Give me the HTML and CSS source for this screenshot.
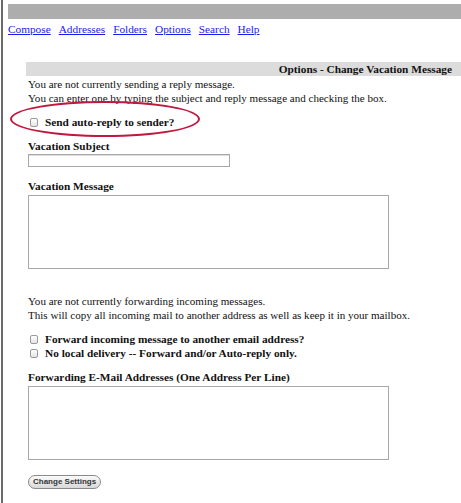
FILE: index.html
```html
<!DOCTYPE html>
<html>
<head>
<meta charset="utf-8">
<link rel="stylesheet" href="styles.css">
</head>
<body>
<div class="frame">
  <div class="topbar"></div>
  <nav class="nav">
    <a href="#">Compose</a>
    <a href="#">Addresses</a>
    <a href="#">Folders</a>
    <a href="#">Options</a>
    <a href="#">Search</a>
    <a href="#">Help</a>
  </nav>
  <div class="content">
    <div class="heading">Options - Change Vacation Message</div>
    <p class="info">You are not currently sending a reply message.<br>You can enter one by typing the subject and reply message and checking the box.</p>
    <div class="checks first">
      <label class="check"><input type="checkbox" class="box"><span>Send auto-reply to sender?</span></label>
      <div class="oval"></div>
    </div>
    <div class="field">
      <div class="label">Vacation Subject</div>
      <input type="text" class="subject">
    </div>
    <div class="field wide">
      <div class="label">Vacation Message</div>
      <textarea class="area"></textarea>
    </div>
    <p class="info second">You are not currently forwarding incoming messages.<br>This will copy all incoming mail to another address as well as keep it in your mailbox.</p>
    <div class="checks">
      <label class="check"><input type="checkbox" class="box"><span>Forward incoming message to another email address?</span></label>
      <label class="check"><input type="checkbox" class="box"><span>No local delivery -- Forward and/or Auto-reply only.</span></label>
    </div>
    <div class="field">
      <div class="label">Forwarding E-Mail Addresses (One Address Per Line)</div>
      <textarea class="area"></textarea>
    </div>
    <button class="btn">Change Settings</button>
  </div>
</div>
</body>
</html>
```
FILE: styles.css
```css
html, body {
  margin: 0;
  padding: 0;
  background: #fff;
}
body {
  font-family: "Liberation Serif", "Times New Roman", serif;
  font-size: 11.3px;
  color: #111;
}
.frame {
  margin-left: 1px;
  border-left: 2px solid #6a6a6a;
  min-height: 503px;
  box-sizing: border-box;
  padding-left: 5px;
  padding-top: 4px;
}
.topbar {
  height: 15px;
  background: #adadad;
}
.nav {
  display: flex;
  gap: 8px;
  padding-top: 3px;
  line-height: 14px;
  font-size: 11.3px;
}
.nav a {
  color: #1a1aee;
  text-decoration: underline;
}
.content {
  padding-left: 18px;
  padding-top: 26px;
}
.heading {
  background: #dcdcdc;
  font-weight: bold;
  text-align: right;
  height: 14px;
  line-height: 15px;
  padding-right: 9px;
}
.info {
  margin: 1px 0 0 2px;
  line-height: 14px;
  font-size: 11.05px;
}
.info.second {
  margin-top: 25px;
}
.checks {
  position: relative;
  margin-top: 10px;
  padding-left: 4px;
  display: flex;
  flex-direction: column;
}
.checks.first {
  margin-top: 10px;
}
.check {
  display: flex;
  align-items: center;
  gap: 7px;
  font-weight: bold;
  line-height: 14px;
}
.box {
  width: 8px;
  height: 9px;
  margin: 0;
  appearance: none;
  border: 1px solid #9a9a9a;
  border-radius: 2px;
  background: linear-gradient(#fff, #e4e4e4);
}
.oval {
  position: absolute;
  left: -16px;
  top: -14px;
  width: 186px;
  height: 32px;
  border: 2px solid #c0183e;
  border-radius: 50%;
}
.field {
  margin-top: 10px;
  padding-left: 2px;
}
.field.wide {
  margin-top: 12px;
}
.field .label {
  font-weight: bold;
  line-height: 14px;
}
.subject {
  display: block;
  margin: 1px 0 0 0;
  padding: 0;
  width: 200px;
  height: 11px;
  border: 1px solid #a8a8a8;
  box-shadow: inset 0 1px 0 #ddd;
}
.area {
  display: block;
  margin: 2px 0 0 0;
  padding: 0;
  width: 359px;
  height: 72px;
  border: 1px solid #a8a8a8;
  resize: none;
}
.btn {
  display: block;
  margin: 15px 0 0 2px;
  padding: 0 4px;
  height: 14px;
  border: 1px solid #8a8a8a;
  border-radius: 7px;
  background: linear-gradient(#fbfbfb, #d8d8d8);
  font-family: "Liberation Sans", Arial, sans-serif;
  font-size: 8px;
  font-weight: bold;
  color: #333;
  line-height: 12px;
}
```
